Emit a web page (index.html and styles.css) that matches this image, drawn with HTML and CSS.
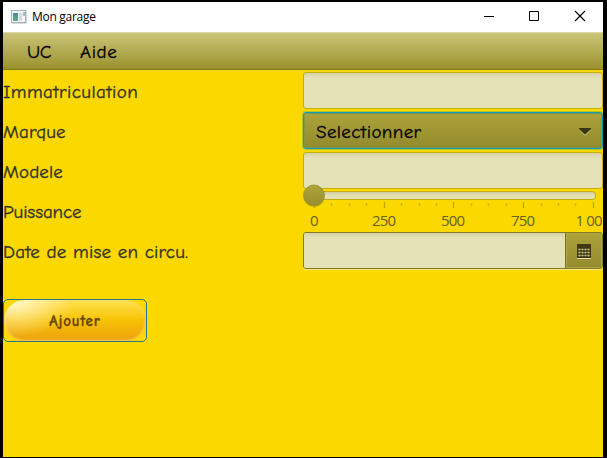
FILE: index.html
```
<!DOCTYPE html>
<html lang="fr">
<head>
<meta charset="utf-8">
<title>Mon garage</title>
<link rel="stylesheet" href="styles.css">
</head>
<body>
<div class="window">
  <header class="titlebar">
    <svg class="app-icon" width="16" height="14" viewBox="0 0 16 14">
      <defs><linearGradient id="pane" x1="0" y1="0" x2="0" y2="1"><stop offset="0" stop-color="#4a8a9c"/><stop offset="1" stop-color="#5fae80"/></linearGradient></defs>
      <rect x=".5" y=".5" width="14" height="12" fill="#f4f6f8" stroke="#a9afb6"/>
      <rect x="2" y="3" width="5" height="8" fill="url(#pane)"/>
      <rect x="8" y="3" width="3" height="8" fill="#d5d8db"/>
      <rect x="12" y="2" width="2" height="4" fill="#9cc4bd"/>
      <path d="M1 13.5h14.5V1" fill="none" stroke="#d5d8dc"/>
    </svg>
    <span class="title">Mon garage</span>
    <svg class="controls" width="102" height="12" viewBox="0 0 102 12" fill="none" stroke="#000">
      <path d="M0 6.5h10M45.500 1.500h9v9h-9z"/>
      <path d="M91 1l10 10M101 1L91 11" stroke-width="1.100"/>
    </svg>
  </header>
  <nav class="menubar"><span class="menu-uc">UC</span><span class="menu-aide">Aide</span></nav>
  <main class="form">
    <label class="label immat">Immatriculation</label>
    <div class="field"></div>
    <label class="label">Marque</label>
    <div class="combo"><span class="combo-text">Selectionner</span>
      <svg class="arrow" width="12" height="8" viewBox="0 0 12 8"><path d="M0 2h12L6 8z" fill="#b9b36a"/><path d="M0 0h12v1L6 6.500 0 1z" fill="#3b3713"/></svg>
    </div>
    <label class="label">Modele</label>
    <div class="field"></div>
    <label class="label puissance">Puissance</label>
    <svg class="slider" width="300" height="43" viewBox="0 0 300 43">
      <defs>
        <linearGradient id="track" x1="0" y1="0" x2="0" y2="1"><stop offset="0" stop-color="#cbc8a0"/><stop offset=".5" stop-color="#e3e0b3"/><stop offset="1" stop-color="#e5e1b0"/></linearGradient>
        <linearGradient id="knob" x1="0" y1="0" x2="0" y2="1"><stop offset="0" stop-color="#ada33c"/><stop offset="1" stop-color="#978e2d"/></linearGradient>
      </defs>
      <rect x="4.500" y="5.500" width="288" height="8" rx="3" fill="url(#track)" stroke="#c3ab10"/>
      <path class="minor" d="M28.500 17v3M46.500 17v3M63.500 17v3M98.500 17v3M116.500 17v3M133.500 17v3M168.500 17v3M185.500 17v3M203.500 17v3M238.500 17v3M255.500 17v3M272.500 17v3"/>
      <path class="major" d="M11.500 17v5M81.500 16v6M150.500 16v6M220.500 16v6M290.500 16v6"/>
      <circle cx="11" cy="10.500" r="11" fill="#cdb205" opacity=".35"/>
      <circle cx="11" cy="9.500" r="10.500" fill="url(#knob)" stroke="#928829" stroke-width=".7"/>
      <g class="ticks">
        <text x="7" y="40" textLength="8">0</text>
        <text x="69" y="40" textLength="24">250</text>
        <text x="138" y="40" textLength="24">500</text>
        <text x="208" y="40" textLength="24">750</text>
        <text x="272.500" y="40" textLength="27">1 00</text>
      </g>
    </svg>
    <label class="label date">Date de mise en circu.</label>
    <div class="datepicker">
      <div class="date-value"></div>
      <div class="date-button">
        <svg class="calendar" width="14" height="15" viewBox="0 0 14 15">
          <path d="M0 14.500h14" stroke="#e2dfaa"/>
          <path d="M0 0h14v14H0z" fill="#3e3914"/>
          <path d="M1.500 5.500h11M1.500 8.500h11M1.500 11.500h11" stroke="#d0cb8a" stroke-width="1.500" stroke-dasharray="2 1"/>
        </svg>
      </div>
    </div>
  </main>
  <button class="add"><span class="pill"><span class="shine"></span><span class="add-text">Ajouter</span></span></button>
</div>
</body>
</html>
```
FILE: styles.css
```
* { box-sizing: border-box; }
body {
  margin: 0;
  height: 458px;
  padding: 2px 4px 1px 3px;
  background: #000;
  overflow: hidden;
  font-family: "Comic Sans MS", "Comic Neue", "Noto Sans", sans-serif;
}
.window { width: 600px; height: 455px; background: #fbd900; overflow: hidden; }
.titlebar {
  height: 30px;
  padding: 0 17px 0 8px;
  display: flex;
  align-items: center;
  background: #fff;
}
.app-icon { margin-right: 5px; margin-top: -1px; }
.title { font: 12px/16px "Segoe UI", "Open Sans", sans-serif; letter-spacing: -.28px; color: #000; }
.controls { margin-left: auto; margin-top: -2px; }
.menubar {
  height: 38px;
  padding: 2px 0 0 24px;
  display: flex;
  align-items: center;
  background: linear-gradient(#cac477, #9b922d);
  border-top: 1px solid #dcd8a5;
  border-bottom: 1px solid #81780f;
  font-size: 19px;
  color: #000;
  -webkit-text-stroke: .3px #000;
}
.menu-uc { width: 53px; letter-spacing: -.5px; }
.menu-aide { letter-spacing: .6px; }
.form {
  padding-top: 2px;
  display: grid;
  grid-template-columns: 300px 300px;
  grid-template-rows: repeat(4, 37px);
  grid-auto-rows: 37px;
  row-gap: 3px;
}
.label {
  font-size: 19px;
  line-height: 40px;
  color: #333129;
  white-space: nowrap;
  letter-spacing: .1px;
  -webkit-text-stroke: .35px #333129;
}
.immat { letter-spacing: .4px; }
.puissance { letter-spacing: -.1px; }
.date { letter-spacing: .2px; }
.field {
  height: 37px;
  border: 1px solid #c8ae0b;
  border-radius: 3px;
  background: linear-gradient(#d5d2a5, #e4e1b7 5px);
}
.combo {
  height: 37px;
  padding: 0 11px 0 12px;
  display: flex;
  align-items: center;
  justify-content: space-between;
  border: 1px solid #0f9cba;
  border-radius: 3px;
  background: linear-gradient(#ada33a, #938a2c);
  box-shadow: 0 0 0 1px #b5c52c, inset 0 0 0 1px #7b9850;
  font-size: 19px;
  color: #000;
}
.combo-text { padding-top: 2px; letter-spacing: .4px; -webkit-text-stroke: .3px #000; }
.arrow { margin-top: 2px; }
.slider { display: block; margin-top: -6px; overflow: visible; }
.minor { stroke: #d2b60b; stroke-width: 1.500px; }
.major { stroke: #bea40b; stroke-width: 1.300px; }
.ticks { font: 15px "Segoe UI", "Open Sans", sans-serif; fill: #66602b; }
.datepicker {
  height: 37px;
  display: flex;
  border: 1px solid #82782a;
  border-radius: 3px;
  box-shadow: 0 1px 0 #fce877;
  overflow: hidden;
}
.date-value { flex: 1; background: linear-gradient(#d5d2a5, #e4e1b7 5px); }
.date-button {
  width: 37px;
  display: flex;
  align-items: center;
  justify-content: center;
  border-left: 1px solid #776e20;
  background: linear-gradient(#ada33a, #938a2c);
  box-shadow: inset 0 0 0 1px #b0a746;
}
.calendar { margin-top: 2px; }
.add {
  display: block;
  width: 144px;
  height: 43px;
  margin-top: 30px;
  padding: 0;
  border: 1px solid #24778d;
  border-radius: 5px;
  background: #fbd900;
  font-family: inherit;
}
.pill {
  position: relative;
  display: flex;
  height: 41px;
  align-items: center;
  justify-content: center;
  overflow: hidden;
  border-radius: 21px;
  background: linear-gradient(#ffe354, #f9c305 48%, #eda00e);
  box-shadow: inset 0 0 2px 1px rgba(255, 214, 110, .75);
}
.shine {
  position: absolute;
  inset: 0;
  border-radius: 21px;
  background: radial-gradient(ellipse 58px 34px at 10px 3px, rgba(255,255,240,.75), rgba(255,240,150,0));
}
.add-text { position: relative; padding-top: 1px; font-size: 15px; letter-spacing: .8px; font-weight: 700; color: #68480a; -webkit-text-stroke: .3px #68480a; }
```
